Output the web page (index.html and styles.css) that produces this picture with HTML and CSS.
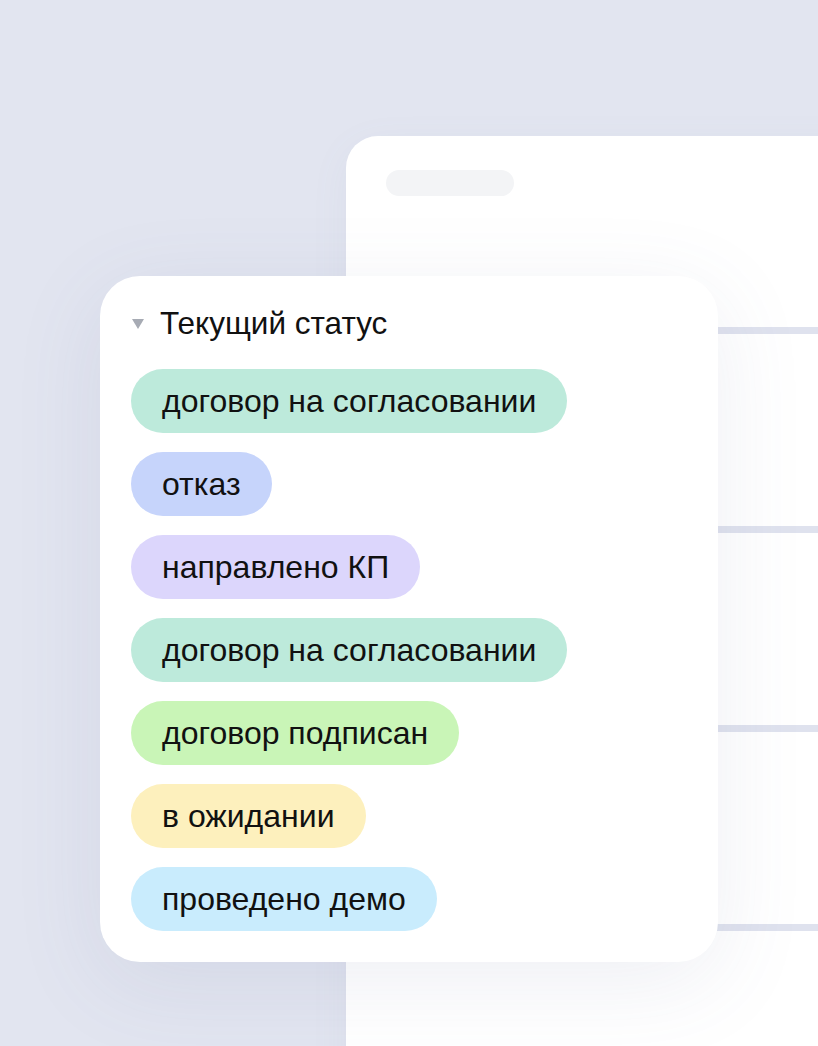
FILE: index.html
```html
<!DOCTYPE html>
<html lang="ru">
<head>
<meta charset="utf-8">
<title>Текущий статус</title>
<link rel="stylesheet" href="styles.css">
</head>
<body>
<div class="canvas">
  <div class="back-card">
    <div class="placeholder"></div>
    <div class="rows">
      <div class="row-line"></div>
      <div class="row-line"></div>
      <div class="row-line"></div>
      <div class="row-line"></div>
    </div>
  </div>
  <div class="front-card">
    <div class="header">
      <span class="caret"></span>
      <span class="title">Текущий статус</span>
    </div>
    <div class="pills">
      <span class="pill pill-mint">договор на согласовании</span>
      <span class="pill pill-blue">отказ</span>
      <span class="pill pill-lavender">направлено КП</span>
      <span class="pill pill-mint">договор на согласовании</span>
      <span class="pill pill-green">договор подписан</span>
      <span class="pill pill-yellow">в ожидании</span>
      <span class="pill pill-sky">проведено демо</span>
    </div>
  </div>
</div>
</body>
</html>
```
FILE: styles.css
```css
* { box-sizing: border-box; }
html, body {
  margin: 0;
  padding: 0;
}
body {
  background: #e2e5f0;
  font-family: "Liberation Sans", Arial, sans-serif;
  color: #111;
}
.canvas {
  position: relative;
  width: 818px;
  height: 1046px;
  overflow: hidden;
  background: #e2e5f0;
}
.back-card {
  position: absolute;
  left: 346px;
  top: 136px;
  width: 540px;
  height: 960px;
  background: #ffffff;
  border-radius: 32px;
  padding: 34px 0 0 40px;
  box-shadow: 0 10px 40px rgba(120, 130, 170, 0.06);
}
.placeholder {
  width: 128px;
  height: 26px;
  border-radius: 13px;
  background: #f3f4f6;
}
.rows {
  margin-top: 131px;
  margin-left: -40px;
  display: flex;
  flex-direction: column;
  gap: 192px;
}
.row-line {
  height: 7px;
  background: #dfe2ee;
}
.front-card {
  position: absolute;
  left: 100px;
  top: 276px;
  width: 618px;
  height: 686px;
  background: #ffffff;
  border-radius: 40px;
  padding: 28px 31px 31px 31px;
  box-shadow: 0 20px 90px rgba(90, 100, 150, 0.10);
}
.header {
  display: flex;
  align-items: center;
  height: 38px;
  margin-bottom: 27px;
}
.caret {
  width: 0;
  height: 0;
  border-left: 6px solid transparent;
  border-right: 6px solid transparent;
  border-top: 10px solid #a7abb4;
  margin-left: 1px;
  margin-right: 16px;
  margin-top: 2px;
}
.title {
  font-size: 31.5px;
  line-height: 38px;
  color: #111;
}
.pills {
  display: flex;
  flex-direction: column;
  align-items: flex-start;
  gap: 19px;
}
.pill {
  display: inline-flex;
  align-items: center;
  height: 64px;
  padding: 0 31px;
  border-radius: 32px;
  font-size: 32px;
  color: #111;
  white-space: nowrap;
}
.pill-mint { background: #bdeadb; }
.pill-blue { background: #c6d4fb; }
.pill-lavender { background: #dcd6fc; }
.pill-green { background: #c9f5b7; }
.pill-yellow { background: #fdf0bd; }
.pill-sky { background: #c9ecfd; }
```
